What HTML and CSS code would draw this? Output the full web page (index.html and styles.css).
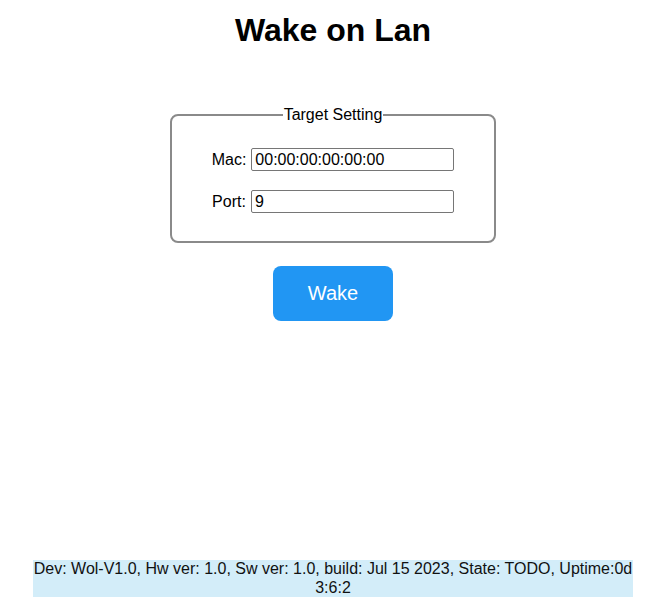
FILE: index.html
```html
<!DOCTYPE html>
<html>
<head>
<meta charset="utf-8">
<title>Wake on Lan</title>
<link rel="stylesheet" href="styles.css">
</head>
<body>
<div class="page">
  <h1 class="title">Wake on Lan</h1>
  <fieldset class="settings">
    <legend class="legend">Target Setting</legend>
    <div class="row"><label class="label" for="mac">Mac:</label> <input class="field" id="mac" type="text" value="00:00:00:00:00:00"></div>
    <div class="row"><label class="label" for="port">Port:</label> <input class="field" id="port" type="text" value="9"></div>
  </fieldset>
  <button class="wake" type="button">Wake</button>
  <div class="footer">Dev: Wol-V1.0, Hw ver: 1.0, Sw ver: 1.0, build: Jul 15 2023, State: TODO, Uptime:0d 3:6:2</div>
</div>
</body>
</html>
```
FILE: styles.css
```css
html, body {
  margin: 0;
  padding: 0;
  background: #fff;
}
body {
  font-family: "Liberation Sans", Arial, sans-serif;
  font-size: 16px;
  color: #000;
}
.page {
  width: 600px;
  margin-left: 33px;
  min-height: 597px;
  display: flex;
  flex-direction: column;
  align-items: center;
}
.title {
  font-size: 32px;
  font-weight: bold;
  margin: 12px 0 0;
  line-height: 37px;
  text-align: center;
}
.settings {
  box-sizing: border-box;
  width: 326px;
  margin: 57px 0 0;
  padding: 24px 0 28px;
  border: 2px solid #8a8a8a;
  border-radius: 8px;
  display: flex;
  flex-direction: column;
  align-items: center;
  gap: 19px;
  min-inline-size: 0;
}
.legend {
  margin: 0 auto;
  padding: 0 1px;
  font-size: 16px;
  line-height: 18px;
}
.row {
  height: 23px;
  display: flex;
  align-items: center;
  gap: 5px;
}
.label {
  font-size: 16px;
}
.field {
  box-sizing: border-box;
  width: 203px;
  height: 23px;
  margin: 0;
  padding: 0 3px;
  border: 1px solid #767676;
  border-radius: 2px;
  font-family: "Liberation Sans", Arial, sans-serif;
  font-size: 16px;
  color: #000;
  background: #fff;
}
.wake {
  box-sizing: border-box;
  width: 120px;
  height: 55px;
  margin-top: 23px;
  border: none;
  border-radius: 8px;
  background: #2196f3;
  color: #fff;
  font-family: "Liberation Sans", Arial, sans-serif;
  font-size: 20px;
  cursor: pointer;
}
.footer {
  margin-top: auto;
  width: 600px;
  background: #d3edf9;
  text-align: center;
  font-size: 16px;
  line-height: 18.4px;
  color: #111;
}
```
